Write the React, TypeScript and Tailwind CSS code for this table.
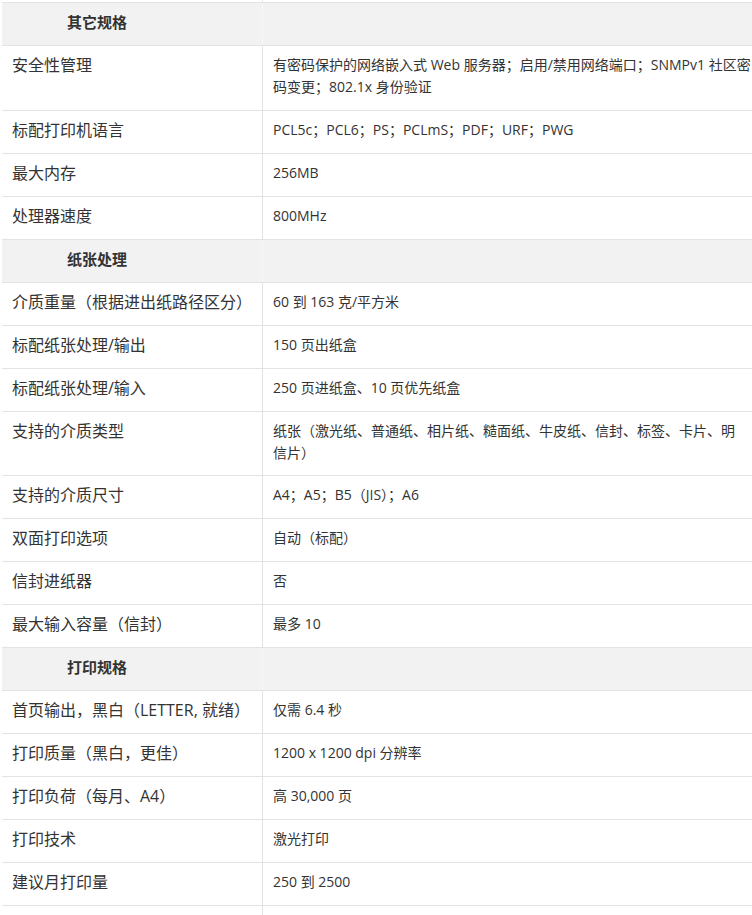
type Row = { label: string; value: string; h?: string };
type Section = { title: string; rows: Row[] };

const sections: Section[] = [
  {
    title: "其它规格",
    rows: [
      {
        label: "安全性管理",
        value: "有密码保护的网络嵌入式 Web 服务器；启用/禁用网络端口；SNMPv1 社区密\n码变更；802.1x 身份验证",
        h: "h-[65px]",
      },
      { label: "标配打印机语言", value: "PCL5c；PCL6；PS；PCLmS；PDF；URF；PWG" },
      { label: "最大内存", value: "256MB" },
      { label: "处理器速度", value: "800MHz" },
    ],
  },
  {
    title: "纸张处理",
    rows: [
      { label: "介质重量（根据进出纸路径区分）", value: "60 到 163 克/平方米" },
      { label: "标配纸张处理/输出", value: "150 页出纸盒" },
      { label: "标配纸张处理/输入", value: "250 页进纸盒、10 页优先纸盒" },
      {
        label: "支持的介质类型",
        value: "纸张（激光纸、普通纸、相片纸、糙面纸、牛皮纸、信封、标签、卡片、明\n信片）",
        h: "h-[64px]",
      },
      { label: "支持的介质尺寸", value: "A4；A5；B5（JIS）；A6" },
      { label: "双面打印选项", value: "自动（标配）" },
      { label: "信封进纸器", value: "否" },
      { label: "最大输入容量（信封）", value: "最多 10" },
    ],
  },
  {
    title: "打印规格",
    rows: [
      { label: "首页输出，黑白（LETTER, 就绪）", value: "仅需 6.4 秒" },
      { label: "打印质量（黑白，更佳）", value: "1200 x 1200 dpi 分辨率" },
      { label: "打印负荷（每月、A4）", value: "高 30,000 页" },
      { label: "打印技术", value: "激光打印" },
      { label: "建议月打印量", value: "250 到 2500" },
    ],
  },
];

const App = () => {
  return (
    <div className="h-[915px] w-[752px] overflow-hidden bg-white pl-[2px] font-['Open_Sans','Noto_Sans_CJK_SC',sans-serif] text-[#333]">
      {/* tail of the previous row */}
      <div className="flex h-[3px] border-b border-[#e3e3e3]">
        <div className="w-[261px] shrink-0 border-r border-[#e3e3e3]"></div>
        <div className="flex-1"></div>
      </div>

      {sections.map((section) => (
        <div key={section.title}>
          <div className="flex h-[43px] border-b border-[#e3e3e3] bg-[#f2f2f2]">
            <div className="w-[261px] shrink-0 border-r border-[#f6f6f6] pl-[65px] text-[15px] font-bold leading-[39px]">
              {section.title}
            </div>
            <div className="flex-1"></div>
          </div>
          {section.rows.map((row) => (
            <div
              key={row.label}
              className={`flex overflow-hidden border-b border-[#e3e3e3] ${row.h ?? "h-[43px]"}`}
            >
              <div className="w-[261px] shrink-0 border-r border-[#e3e3e3] px-[10px] pt-[8px] text-[16px] leading-[22px]">
                {row.label}
              </div>
              <div className="flex-1 whitespace-pre pl-[10px] pt-[8px] text-[14px] leading-[22px]">
                {row.value}
              </div>
            </div>
          ))}
        </div>
      ))}

      {/* start of the next row, cut off by the window */}
      <div className="flex h-[43px]">
        <div className="w-[261px] shrink-0 border-r border-[#e3e3e3]"></div>
        <div className="flex-1"></div>
      </div>
    </div>
  );
};

export default App;
